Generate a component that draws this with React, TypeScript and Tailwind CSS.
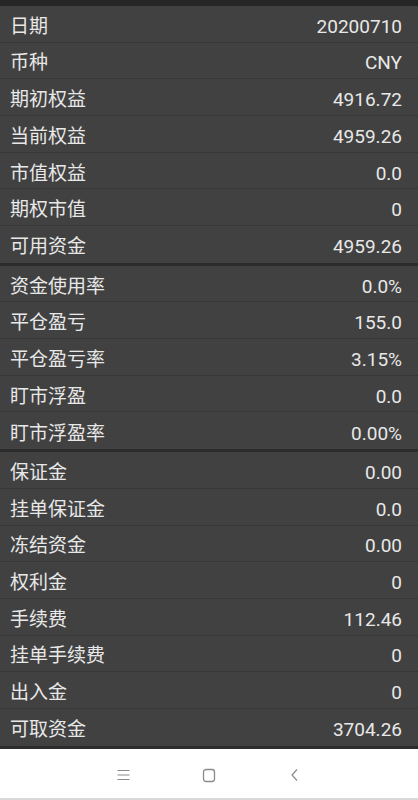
import React from "react";

const SECTIONS: [string, string][][] = [
  [
    ["日期", "20200710"],
    ["币种", "CNY"],
    ["期初权益", "4916.72"],
    ["当前权益", "4959.26"],
    ["市值权益", "0.0"],
    ["期权市值", "0"],
    ["可用资金", "4959.26"],
  ],
  [
    ["资金使用率", "0.0%"],
    ["平仓盈亏", "155.0"],
    ["平仓盈亏率", "3.15%"],
    ["盯市浮盈", "0.0"],
    ["盯市浮盈率", "0.00%"],
  ],
  [
    ["保证金", "0.00"],
    ["挂单保证金", "0.0"],
    ["冻结资金", "0.00"],
    ["权利金", "0"],
    ["手续费", "112.46"],
    ["挂单手续费", "0"],
    ["出入金", "0"],
    ["可取资金", "3704.26"],
  ],
];

export default function App() {
  return (
    <div
      className="w-[418px] h-[800px] flex flex-col bg-[#2c2c2c] overflow-hidden"
      style={{ fontFamily: 'Roboto, "Noto Sans CJK SC", sans-serif' }}
    >
      {/* status strip */}
      <div className="h-[6px] bg-[#262626]" />

      {/* account rows */}
      <div className="flex-1 flex flex-col">
        {SECTIONS.map((rows, si) => (
          <div key={si} className="border-b-[3px] border-[#2c2c2c]">
            {rows.map(([label, value], i) => (
              <div
                key={label}
                className={`h-[36.7px] flex items-center justify-between pl-[10px] pr-[16px] pt-[5px] bg-[#414141] text-[#e8e8e8] text-[19px] leading-none ${
                  i < rows.length - 1 ? "border-b border-[#373737]" : ""
                }`}
              >
                <span>{label}</span>
                <span>{value}</span>
              </div>
            ))}
          </div>
        ))}
      </div>

      {/* android nav bar */}
      <div className="h-[52px] bg-white flex items-center border-b-2 border-[#d9d9d9]">
        <div className="w-full flex items-center justify-center gap-[66px] pt-[4px]">
          <div className="w-[20px] flex justify-center">
            <svg width="13" height="12" viewBox="0 0 13 12" fill="none" stroke="#8a8a8a" strokeWidth="1.2">
              <path d="M0.5 1.5h12M0.5 6h12M0.5 10.5h12" />
            </svg>
          </div>
          <div className="w-[20px] flex justify-center">
            <svg width="14" height="15" viewBox="0 0 14 15" fill="none" stroke="#8a8a8a" strokeWidth="1.3">
              <rect x="1.5" y="1.5" width="11" height="12" rx="2.5" />
            </svg>
          </div>
          <div className="w-[20px] flex justify-center">
            <svg width="10" height="14" viewBox="0 0 10 14" fill="none" stroke="#8a8a8a" strokeWidth="1.2">
              <path d="M7 1.5L2 7l5 5.5" />
            </svg>
          </div>
        </div>
      </div>
    </div>
  );
}
